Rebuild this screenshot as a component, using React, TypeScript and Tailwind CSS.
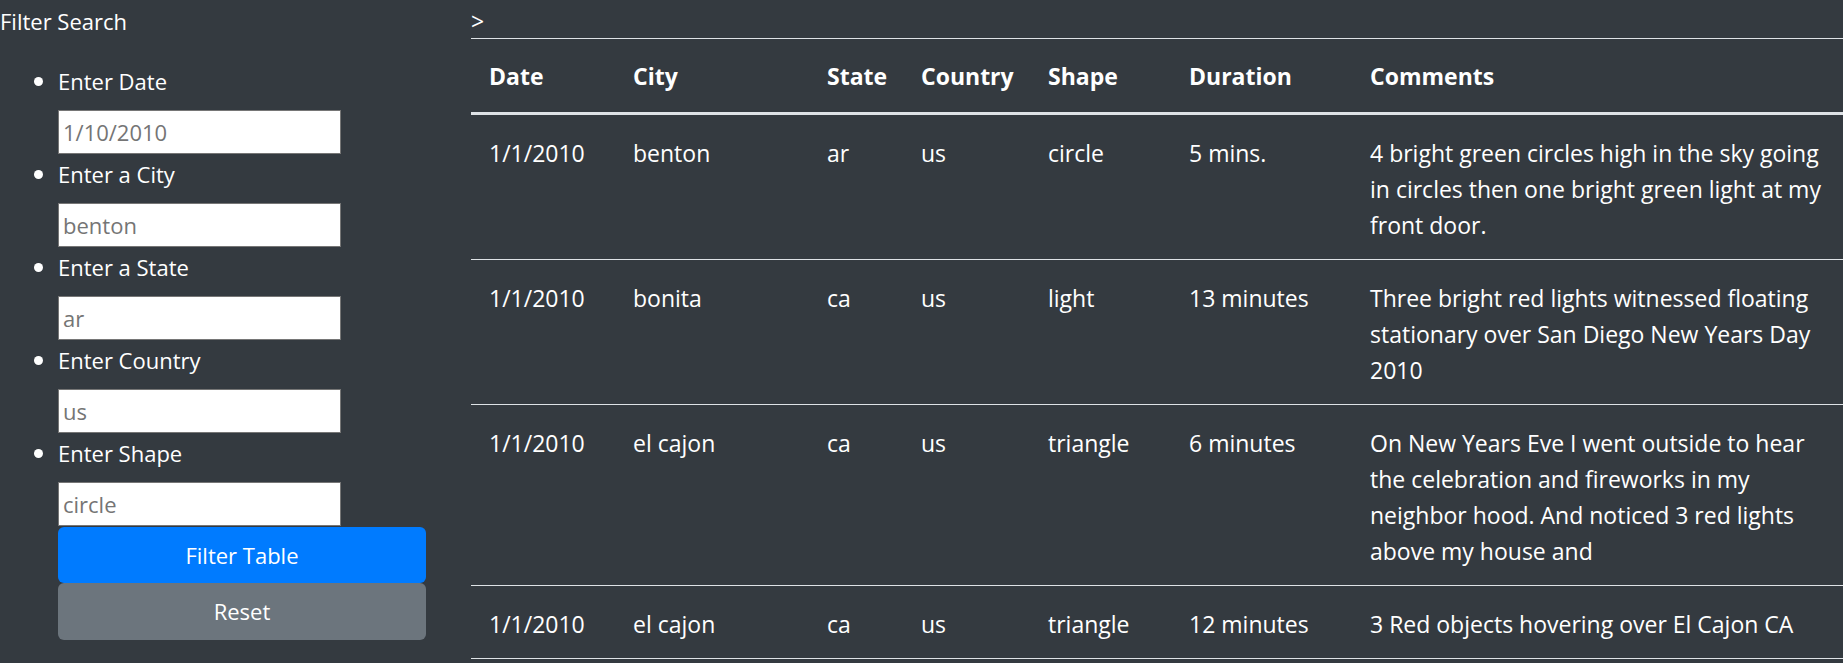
const filters = [
  { id: 'datetime', label: 'Enter Date', placeholder: '1/10/2010' },
  { id: 'city', label: 'Enter a City', placeholder: 'benton' },
  { id: 'state', label: 'Enter a State', placeholder: 'ar' },
  { id: 'country', label: 'Enter Country', placeholder: 'us' },
  { id: 'shape', label: 'Enter Shape', placeholder: 'circle' },
];

const sightings = [
  {
    datetime: '1/1/2010',
    city: 'benton',
    state: 'ar',
    country: 'us',
    shape: 'circle',
    duration: '5 mins.',
    comments: '4 bright green circles high in the sky going in circles then one bright green light at my front door.',
  },
  {
    datetime: '1/1/2010',
    city: 'bonita',
    state: 'ca',
    country: 'us',
    shape: 'light',
    duration: '13 minutes',
    comments: 'Three bright red lights witnessed floating stationary over San Diego New Years Day 2010',
  },
  {
    datetime: '1/1/2010',
    city: 'el cajon',
    state: 'ca',
    country: 'us',
    shape: 'triangle',
    duration: '6 minutes',
    comments:
      'On New Years Eve I went outside to hear the celebration and fireworks in my neighbor hood. And noticed 3 red lights above my house and',
  },
  {
    datetime: '1/1/2010',
    city: 'el cajon',
    state: 'ca',
    country: 'us',
    shape: 'triangle',
    duration: '12 minutes',
    comments: '3 Red objects hovering over El Cajon CA',
  },
];

const headers = ['Date', 'City', 'State', 'Country', 'Shape', 'Duration', 'Comments'];

function FilterForm() {
  return (
    <aside className="w-[471px] shrink-0 text-[22px]">
      <div className="pt-[3px] leading-[36px]">Filter Search</div>
      <ul className="mt-[25px] flex flex-col gap-[3px]">
        {filters.map((f) => (
          <li key={f.id}>
            <div className="flex h-[36px] items-center pb-[2px]">
              <span className="ml-[34px] mr-[15px] h-[9px] w-[9px] rounded-full bg-white" />
              <label htmlFor={f.id} className="leading-[34px]">
                {f.label}
              </label>
            </div>
            <input
              id={f.id}
              type="text"
              placeholder={f.placeholder}
              className="mt-[10px] ml-[58px] block h-[44px] w-[283px] border border-[#767676] bg-white px-[4px] text-[22px] text-[#495057] outline-none placeholder:text-[#757575]"
            />
          </li>
        ))}
      </ul>
      <div className="ml-[58px] mt-px flex w-[368px] flex-col">
        <button type="button" className="h-[56px] rounded-[6px] bg-[#007bff] text-[22px] text-white">
          Filter Table
        </button>
        <button type="button" className="h-[57px] rounded-[6px] bg-[#6c757d] text-[22px] text-white">
          Reset
        </button>
      </div>
    </aside>
  );
}

function SightingsTable() {
  return (
    <main className="min-w-0 flex-1">
      <div className="pt-[5px] text-[23px] leading-[33px]">&gt;</div>
      <table className="w-full table-fixed text-[23px] leading-[36px]">
        <colgroup>
          <col className="w-[144px]" />
          <col className="w-[194px]" />
          <col className="w-[94px]" />
          <col className="w-[127px]" />
          <col className="w-[141px]" />
          <col className="w-[181px]" />
          <col />
        </colgroup>
        <thead>
          <tr>
            {headers.map((h) => (
              <th
                key={h}
                className="border-t border-b-[3px] border-[#dee2e6] px-[18px] pt-[19px] pb-[18px] text-left align-bottom font-bold"
              >
                {h}
              </th>
            ))}
          </tr>
        </thead>
        <tbody>
          {sightings.map((s, i) => (
            <tr key={i} className="border-b border-[#dee2e6]">
              <td className="px-[18px] pt-[20px] pb-[16px] align-top">{s.datetime}</td>
              <td className="px-[18px] pt-[20px] pb-[16px] align-top">{s.city}</td>
              <td className="px-[18px] pt-[20px] pb-[16px] align-top">{s.state}</td>
              <td className="px-[18px] pt-[20px] pb-[16px] align-top">{s.country}</td>
              <td className="px-[18px] pt-[20px] pb-[16px] align-top">{s.shape}</td>
              <td className="px-[18px] pt-[20px] pb-[16px] align-top">{s.duration}</td>
              <td className="px-[18px] pt-[20px] pb-[16px] align-top">{s.comments}</td>
            </tr>
          ))}
        </tbody>
      </table>
    </main>
  );
}

export default function App() {
  return (
    <div className="flex min-h-screen bg-[#343a40] font-['Open_Sans',sans-serif] text-white">
      <FilterForm />
      <SightingsTable />
    </div>
  );
}
